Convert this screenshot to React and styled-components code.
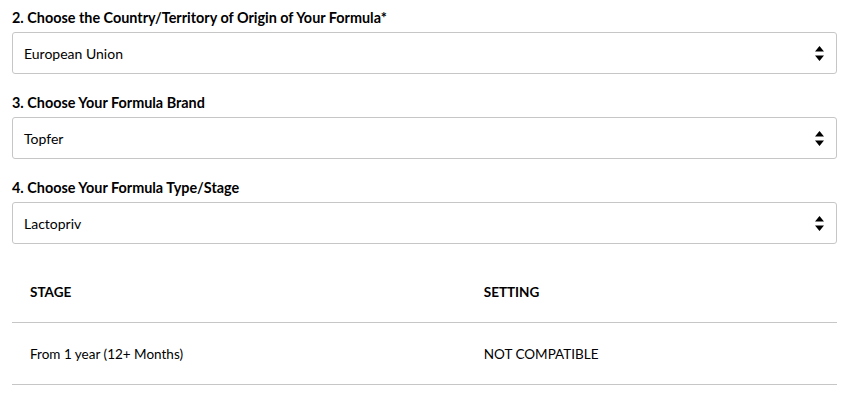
import React from 'react'
import styled, { createGlobalStyle } from 'styled-components'

const GlobalStyle = createGlobalStyle`
  body {
    margin: 0;
    background: #fff;
    font-family: Lato, "Open Sans", Arial, sans-serif;
    color: #000;
  }
`

const Wrapper = styled.div`
  padding: 8px 29px 0 12px;
  width: 825px;
`

const Field = styled.div`
  margin-bottom: 19px;
`

const Label = styled.div`
  font-size: 14.4px;
  font-weight: bold;
  line-height: 20px;
  margin-bottom: 4px;
`

const SelectBox = styled.div`
  display: flex;
  align-items: center;
  justify-content: space-between;
  height: 40px;
  border: 1px solid #c6c6c6;
  border-radius: 3px;
  padding: 0 12px 0 11px;
  font-size: 14px;
`

const Arrows = styled.svg`
  width: 9px;
  height: 15px;
`

const Table = styled.table`
  width: 100%;
  border-collapse: collapse;
  margin-top: -1px;
  font-size: 13.5px;

  th {
    text-align: left;
    font-weight: bold;
    height: 60px;
    padding: 0 18px;
    border-bottom: 1px solid #c6c6c6;
  }

  td {
    height: 61px;
    padding: 0 18px;
    border-bottom: 1px solid #c6c6c6;
  }
`

const Select = ({ value }) => (
  <SelectBox>
    <span>{value}</span>
    <Arrows viewBox="0 0 9 15">
      <path d="M4.5 0 L9 5.5 L0 5.5 Z M0 9.5 L9 9.5 L4.5 15 Z" fill="#000" />
    </Arrows>
  </SelectBox>
)

const fields = [
  { label: '2. Choose the Country/Territory of Origin of Your Formula*', value: 'European Union' },
  { label: '3. Choose Your Formula Brand', value: 'Topfer' },
  { label: '4. Choose Your Formula Type/Stage', value: 'Lactopriv' },
]

const App = () => (
  <Wrapper>
    <GlobalStyle />
    {fields.map(f => (
      <Field key={f.label}>
        <Label>{f.label}</Label>
        <Select value={f.value} />
      </Field>
    ))}
    <Table>
      <thead>
        <tr>
          <th style={{ width: '55%' }}>STAGE</th>
          <th>SETTING</th>
        </tr>
      </thead>
      <tbody>
        <tr>
          <td>From 1 year (12+ Months)</td>
          <td>NOT COMPATIBLE</td>
        </tr>
      </tbody>
    </Table>
  </Wrapper>
)

export default App
